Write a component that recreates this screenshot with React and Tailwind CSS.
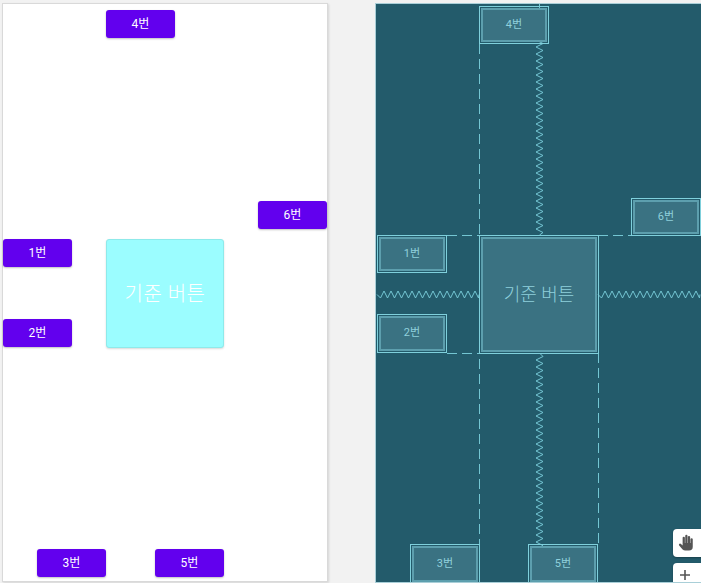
import React from "react";

const FONT = { fontFamily: "Roboto, 'Noto Sans CJK KR', sans-serif" };

// design view buttons (visible purple area, relative to panel inner box)
const designButtons = [
  { label: "4번", left: 103, top: 6 },
  { label: "6번", left: 255, top: 197 },
  { label: "1번", left: 0, top: 235 },
  { label: "2번", left: 0, top: 315 },
  { label: "3번", left: 34, top: 545 },
  { label: "5번", left: 152, top: 545 },
];

// blueprint view bounds (relative to blueprint panel)
const blueprintBoxes = [
  { label: "4번", left: 103, top: 2, w: 70, h: 38 },
  { label: "6번", left: 255, top: 194, w: 70, h: 38 },
  { label: "1번", left: 1, top: 231, w: 70, h: 38 },
  { label: "2번", left: 1, top: 310, w: 70, h: 39 },
  { label: "3번", left: 34, top: 540, w: 70, h: 40 },
  { label: "5번", left: 152, top: 540, w: 70, h: 40 },
];

function zigzagV(x, y0, y1, amp = 3.5, step = 3.5) {
  let d = `M${x} ${y0}`;
  let side = 1;
  for (let y = y0 + step; y < y1; y += step) {
    d += ` L${x + amp * side} ${y}`;
    side = -side;
  }
  return d + ` L${x} ${y1}`;
}

function zigzagH(y, x0, x1, amp = 3.5, step = 3.5) {
  let d = `M${x0} ${y}`;
  let side = 1;
  for (let x = x0 + step; x < x1; x += step) {
    d += ` L${x} ${y + amp * side}`;
    side = -side;
  }
  return d + ` L${x1} ${y}`;
}

function DesignView() {
  return (
    <div className="relative shrink-0 w-[326px] h-[579px] bg-white border border-[#d9d9d9] shadow-[1px_1px_2px_rgba(0,0,0,0.12)]">
      {designButtons.map(b => (
        <div
          key={b.label}
          className="absolute w-[69px] h-[28px] rounded-[3px] bg-[#6200ee] text-white text-[12px] font-normal flex items-center justify-center shadow-[0_1px_2px_rgba(0,0,0,0.25)]"
          style={{ left: b.left, top: b.top }}
        >
          {b.label}
        </div>
      ))}
      <div className="absolute left-[103px] top-[235px] w-[118px] h-[109px] rounded-[3px] bg-[#9bfdff] border border-[#8eeaea] shadow-[0_1px_2px_rgba(0,0,0,0.15)] text-white text-[20px] font-light flex items-center justify-center tracking-wide">
        기준 버튼
      </div>
    </div>
  );
}

function BlueprintView() {
  const line = "#74c6d3";
  return (
    <div className="relative shrink-0 w-[330px] h-[580px] bg-[#235b6b] border border-[#a9cfd8] overflow-hidden">
      <svg className="absolute left-0 top-0" width="330" height="580">
        <g stroke={line} strokeWidth="1" fill="none">
          {/* vertical dashed guides */}
          <path d="M103.5 40 L103.5 540" strokeDasharray="10 5" />
          <path d="M222.5 349 L222.5 540" strokeDasharray="10 5" />
          <path d="M222.5 233 L222.5 349" strokeDasharray="3 2" />
          {/* horizontal dashed guides */}
          <path d="M71 231.5 L104 231.5" strokeDasharray="10 5" />
          <path d="M222 231.5 L255 231.5" strokeDasharray="10 5" />
          <path d="M71 349.5 L104 349.5" strokeDasharray="10 5" />
          {/* springs */}
          <path d="M163.5 0 L163.5 8" />
          <path d={zigzagV(163.5, 8, 231)} />
          <path d={zigzagV(163.5, 349, 580)} />
          <path d={zigzagH(290.5, 1, 103)} />
          <path d={zigzagH(290.5, 222, 324)} />
        </g>
      </svg>
      {blueprintBoxes.map(b => (
        <div
          key={b.label}
          className="absolute border border-[#7fd0dc] p-[1px]"
          style={{ left: b.left, top: b.top, width: b.w, height: b.h }}
        >
          <div className="w-full h-full border-2 border-[#5d9fae] bg-[#3a7282] flex items-center justify-center text-[11px] text-[#8fd0dc]">
            {b.label}
          </div>
        </div>
      ))}
      <div className="absolute left-[103px] top-[231px] w-[120px] h-[119px] border border-[#7fd0dc] p-[1px]">
        <div className="w-full h-full border-2 border-[#5d9fae] bg-[#3a7282] flex items-center justify-center text-[18px] text-[#8fd0dc] font-light">
          기준 버튼
        </div>
      </div>
      {/* zoom / pan controls */}
      <div className="absolute left-[297px] top-[525px] flex flex-col gap-[6px]">
        <div className="w-[34px] h-[28px] bg-white rounded-l-[4px] shadow-[0_1px_2px_rgba(0,0,0,0.3)] flex items-center pl-[4px]">
          <svg width="18" height="18" viewBox="0 0 24 24" fill="#555">
            <path d="M21 7a1.5 1.5 0 0 0-3 0v5h-.5V4a1.5 1.5 0 0 0-3 0v8H14V2.5a1.5 1.5 0 0 0-3 0V12h-.5V5a1.5 1.5 0 0 0-3 0v10.2l-2.6-2.1a1.5 1.5 0 0 0-2 2.2l4.6 5.2A5 5 0 0 0 11.3 22H16a5 5 0 0 0 5-5z" />
          </svg>
        </div>
        <div className="w-[34px] h-[28px] bg-white rounded-l-[4px] shadow-[0_1px_2px_rgba(0,0,0,0.3)] flex items-start pl-[6px] pt-[6px]">
          <svg width="12" height="12" viewBox="0 0 12 12" stroke="#555" strokeWidth="1.6">
            <path d="M6 1 V11 M1 6 H11" />
          </svg>
        </div>
      </div>
    </div>
  );
}

export default function App() {
  return (
    <div className="flex items-start gap-[47px] pl-[2px] pt-[3px] w-[701px] h-[583px] bg-[#f2f2f2] overflow-hidden" style={FONT}>
      <DesignView />
      <BlueprintView />
    </div>
  );
}
